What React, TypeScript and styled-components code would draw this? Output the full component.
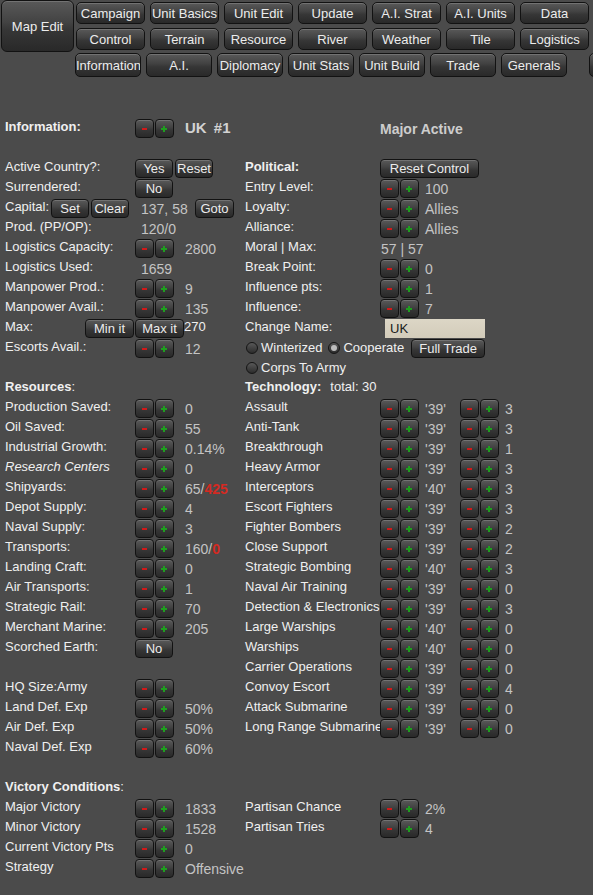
import React from 'react'
import styled, { createGlobalStyle } from 'styled-components'

const GlobalStyle = createGlobalStyle`
  html, body {
    margin: 0;
    padding: 0;
    background: #4b4b4b;
    overflow: hidden;
  }
  body {
    font-family: 'Liberation Sans', Arial, sans-serif;
    font-size: 13px;
    color: #f2f2f2;
  }
`

const Page = styled.div`
    width: 593px;
    height: 895px;
    overflow: hidden;
    background: #4b4b4b;
`

const btnFace = `
    box-sizing: border-box;
    padding: 0;
    border: 1px solid #121212;
    background: linear-gradient(to bottom, #595959 0%, #434343 42%, #363636 58%, #292929 100%);
    box-shadow: inset 0 1px 0 rgba(255, 255, 255, 0.16);
    color: #ececec;
    font-family: 'Liberation Sans', Arial, sans-serif;
    font-size: 13px;
    white-space: nowrap;
    overflow: hidden;
    flex: 0 0 auto;
`

/* ---------- top toolbar ---------- */

const TopBand = styled.div`
    display: flex;
    height: 53px;
`

const ToolBtn = styled.button<{ $w: number; $h: number; $ml?: number }>`
    ${btnFace}
    width: ${p => p.$w}px;
    height: ${p => p.$h}px;
    margin-left: ${p => p.$ml ?? 0}px;
    border-radius: 5px;
`

const MapEditBtn = styled(ToolBtn)`
    margin-left: 1px;
    border-radius: 6px;
`

const TabGrid = styled.div`
    display: grid;
    grid-template-columns: repeat(7, 69px);
    grid-auto-rows: 22px;
    gap: 4px 5px;
    padding-top: 2px;
    margin-left: 2px;
`

const TabRow = styled.div`
    display: flex;
    gap: 5px;
    padding-left: 75px;
    height: 24px;
`

/* ---------- panel ---------- */

const Content = styled.div`
    display: flex;
    padding: 41px 0 0 5px;
`

const Column = styled.div<{ $w?: number }>`
    display: flex;
    flex-direction: column;
    ${p => p.$w ? `flex: 0 0 ${p.$w}px;` : 'flex: 1;'}
`

const Row = styled.div<{ $center?: boolean }>`
    display: flex;
    align-items: ${p => p.$center ? 'center' : 'flex-start'};
    height: 20px;
    white-space: nowrap;
`

const Label = styled.span<{ $w?: number; $bold?: boolean; $italic?: boolean; $ml?: number }>`
    ${p => p.$w !== undefined ? `flex: 0 0 ${p.$w}px; width: ${p.$w}px; min-width: 0;` : 'flex: 0 0 auto;'}
    margin-left: ${p => p.$ml ?? 0}px;
    overflow: visible;
    line-height: 18px;
    font-size: 13px;
    color: #f0f0f0;
    font-weight: ${p => p.$bold ? 700 : 400};
    font-style: ${p => p.$italic ? 'italic' : 'normal'};
`

const Value = styled.span<{ $ml?: number; $w?: number }>`
    margin-left: ${p => p.$ml ?? 0}px;
    ${p => p.$w ? `flex: 0 0 ${p.$w}px;` : ''}
    padding-top: 3px;
    line-height: 16px;
    font-size: 14px;
    color: #c4c4c4;
`

const Red = styled.b`
    color: #d42a22;
`

const Title = styled.span`
    margin-left: 11px;
    line-height: 20px;
    font-size: 15px;
    font-weight: 700;
    color: #d2d2d2;
    word-spacing: 3px;
`

const Status = styled.span`
    line-height: 22px;
    font-size: 14px;
    font-weight: 700;
    color: #cdcdcd;
`

const Pair = styled.div<{ $ml?: number }>`
    display: flex;
    gap: 1px;
    margin-top: 1px;
    margin-left: ${p => p.$ml ?? 0}px;
    flex: 0 0 auto;
`

const StepBtn = styled.button<{ $plus?: boolean }>`
    ${btnFace}
    position: relative;
    width: 19px;
    height: 19px;
    border-radius: 4px;

    &::before {
        content: '';
        position: absolute;
        left: ${p => p.$plus ? 5 : 6}px;
        top: 8px;
        width: ${p => p.$plus ? 6 : 5}px;
        height: 2px;
        background: ${p => p.$plus ? '#1f9e1f' : '#cf1a1a'};
    }

    ${p => p.$plus ? `
    &::after {
        content: '';
        position: absolute;
        left: 7px;
        top: 6px;
        width: 2px;
        height: 6px;
        background: #1f9e1f;
    }` : ''}
`

const TextBtn = styled.button<{ $w: number; $ml?: number }>`
    ${btnFace}
    width: ${p => p.$w}px;
    height: 19px;
    margin-top: 1px;
    margin-left: ${p => p.$ml ?? 0}px;
    border-radius: 4px;
    line-height: 17px;
`

const NameInput = styled.input`
    box-sizing: border-box;
    width: 100px;
    height: 19px;
    margin: 1px 0 0 5px;
    padding: 0 5px;
    border: 0;
    background: linear-gradient(to bottom, #dcd6c6, #d3ccba);
    color: #1b1b1b;
    font-family: 'Liberation Sans', Arial, sans-serif;
    font-size: 13px;
    outline: none;
`

const Toggle = styled.span<{ $on?: boolean; $ml?: number }>`
    position: relative;
    box-sizing: border-box;
    flex: 0 0 12px;
    height: 12px;
    margin-left: ${p => p.$ml ?? 0}px;
    margin-right: 3px;
    border-radius: 50%;
    border: 1px solid #151515;
    background: linear-gradient(to bottom, #585858, #2c2c2c);

    ${p => p.$on ? `
    &::after {
        content: '';
        position: absolute;
        left: 2px;
        top: 2px;
        width: 6px;
        height: 6px;
        border-radius: 50%;
        background: #bdbdbd;
    }` : ''}
`

const Blank = styled.div`
    height: 20px;
`

const Stepper: React.FC<{ ml?: number }> = ({ ml }) => (
    <Pair $ml={ml}>
        <StepBtn aria-label='decrease' />
        <StepBtn $plus aria-label='increase' />
    </Pair>
)

type StatProps = {
    label: string;
    value?: React.ReactNode;
    w: number;
    gap: number;
    italic?: boolean;
}

const StatRow: React.FC<StatProps> = ({ label, value, w, gap, italic }) => (
    <Row>
        <Label $w={w} $italic={italic}>{label}</Label>
        <Stepper />
        {value !== undefined && <Value $ml={gap}>{value}</Value>}
    </Row>
)

const tabsTop = ['Campaign', 'Unit Basics', 'Unit Edit', 'Update', 'A.I. Strat', 'A.I. Units', 'Data',
    'Control', 'Terrain', 'Resource', 'River', 'Weather', 'Tile', 'Logistics']

const tabsBottom = ['Information', 'A.I.', 'Diplomacy', 'Unit Stats', 'Unit Build', 'Trade', 'Generals']

const resources: [string, React.ReactNode, boolean?][] = [
    ['Production Saved:', '0'],
    ['Oil Saved:', '55'],
    ['Industrial Growth:', '0.14%'],
    ['Research Centers', '0', true],
    ['Shipyards:', <>65/<Red>425</Red></>],
    ['Depot Supply:', '4'],
    ['Naval Supply:', '3'],
    ['Transports:', <>160/<Red>0</Red></>],
    ['Landing Craft:', '0'],
    ['Air Transports:', '1'],
    ['Strategic Rail:', '70'],
    ['Merchant Marine:', '205'],
]

const tech: [string, string, string][] = [
    ['Assault', "'39'", '3'],
    ['Anti-Tank', "'39'", '3'],
    ['Breakthrough', "'39'", '1'],
    ['Heavy Armor', "'39'", '3'],
    ['Interceptors', "'40'", '3'],
    ['Escort Fighters', "'39'", '3'],
    ['Fighter Bombers', "'39'", '2'],
    ['Close Support', "'39'", '2'],
    ['Strategic Bombing', "'40'", '3'],
    ['Naval Air Training', "'39'", '0'],
    ['Detection & Electronics', "'39'", '3'],
    ['Large Warships', "'40'", '0'],
    ['Warships', "'40'", '0'],
    ['Carrier Operations', "'39'", '0'],
    ['Convoy Escort', "'39'", '4'],
    ['Attack Submarine', "'39'", '0'],
    ['Long Range Submarine', "'39'", '0'],
]

const L = 130
const R = 135

const App: React.FC = () => {
    return (
        <Page>
            <GlobalStyle />

            <TopBand>
                <MapEditBtn $w={73} $h={52}>Map Edit</MapEditBtn>
                <TabGrid>
                    {tabsTop.map(t => <ToolBtn key={t} $w={69} $h={22}>{t}</ToolBtn>)}
                </TabGrid>
            </TopBand>
            <TabRow>
                {tabsBottom.map(t => <ToolBtn key={t} $w={66} $h={24}>{t}</ToolBtn>)}
                <ToolBtn $w={66} $h={24} $ml={17} />
            </TabRow>

            <Content>
                <Column $w={240}>
                    <Row>
                        <Label $w={L} $bold>Information:</Label>
                        <Stepper />
                        <Title>UK #1</Title>
                    </Row>
                    <Blank />
                    <Row>
                        <Label $w={L}>Active Country?:</Label>
                        <TextBtn $w={38}>Yes</TextBtn>
                        <TextBtn $w={38} $ml={2}>Reset</TextBtn>
                    </Row>
                    <Row>
                        <Label $w={L}>Surrendered:</Label>
                        <TextBtn $w={38}>No</TextBtn>
                    </Row>
                    <Row>
                        <Label $w={46}>Capital:</Label>
                        <TextBtn $w={38}>Set</TextBtn>
                        <TextBtn $w={38} $ml={2}>Clear</TextBtn>
                        <Value $ml={12} $w={54}>137, 58</Value>
                        <TextBtn $w={39}>Goto</TextBtn>
                    </Row>
                    <Row>
                        <Label $w={L}>Prod. (PP/OP):</Label>
                        <Value $ml={6}>120/0</Value>
                    </Row>
                    <StatRow label='Logistics Capacity:' value='2800' w={L} gap={11} />
                    <Row>
                        <Label $w={L}>Logistics Used:</Label>
                        <Value $ml={6}>1659</Value>
                    </Row>
                    <StatRow label='Manpower Prod.:' value='9' w={L} gap={11} />
                    <StatRow label='Manpower Avail.:' value='135' w={L} gap={11} />
                    <Row>
                        <Label $w={80}>Max:</Label>
                        <TextBtn $w={49}>Min it</TextBtn>
                        <TextBtn $w={49} $ml={1}>Max it</TextBtn>
                        <Label>270</Label>
                    </Row>
                    <StatRow label='Escorts Avail.:' value='12' w={L} gap={11} />
                    <Blank />
                    <Row>
                        <Label $bold>Resources</Label>
                        <Label>:</Label>
                    </Row>
                    {resources.map(([label, value, italic]) => (
                        <StatRow key={label} label={label} value={value} italic={italic} w={L} gap={11} />
                    ))}
                    <Row>
                        <Label $w={L}>Scorched Earth:</Label>
                        <TextBtn $w={38}>No</TextBtn>
                    </Row>
                    <Blank />
                    <StatRow label='HQ Size:Army' w={L} gap={11} />
                    <StatRow label='Land Def. Exp' value='50%' w={L} gap={11} />
                    <StatRow label='Air Def. Exp' value='50%' w={L} gap={11} />
                    <StatRow label='Naval Def. Exp' value='60%' w={L} gap={11} />
                    <Blank />
                    <Row>
                        <Label $bold>Victory Conditions</Label>
                        <Label>:</Label>
                    </Row>
                    <StatRow label='Major Victory' value='1833' w={L} gap={11} />
                    <StatRow label='Minor Victory' value='1528' w={L} gap={11} />
                    <StatRow label='Current Victory Pts' value='0' w={L} gap={11} />
                    <StatRow label='Strategy' value='Offensive' w={L} gap={11} />
                </Column>

                <Column>
                    <Row>
                        <Label $w={R} />
                        <Status>Major Active</Status>
                    </Row>
                    <Blank />
                    <Row>
                        <Label $w={R} $bold>Political:</Label>
                        <TextBtn $w={99}>Reset Control</TextBtn>
                    </Row>
                    <StatRow label='Entry Level:' value='100' w={R} gap={6} />
                    <StatRow label='Loyalty:' value='Allies' w={R} gap={6} />
                    <StatRow label='Alliance:' value='Allies' w={R} gap={6} />
                    <Row>
                        <Label $w={R}>Moral | Max:</Label>
                        <Value $ml={1}>57 | 57</Value>
                    </Row>
                    <StatRow label='Break Point:' value='0' w={R} gap={6} />
                    <StatRow label='Influence pts:' value='1' w={R} gap={6} />
                    <StatRow label='Influence:' value='7' w={R} gap={6} />
                    <Row>
                        <Label $w={R}>Change Name:</Label>
                        <NameInput defaultValue='UK' />
                    </Row>
                    <Row $center>
                        <Toggle $ml={1} />
                        <Label>Winterized</Label>
                        <Toggle $on $ml={6} />
                        <Label>Cooperate</Label>
                        <TextBtn $w={74} $ml={7}>Full Trade</TextBtn>
                    </Row>
                    <Row $center>
                        <Toggle $ml={1} />
                        <Label>Corps To Army</Label>
                    </Row>
                    <Row>
                        <Label $bold>Technology:</Label>
                        <Label $ml={9}>total: 30</Label>
                    </Row>
                    {tech.map(([name, year, level]) => (
                        <Row key={name}>
                            <Label $w={R}>{name}</Label>
                            <Stepper />
                            <Value $ml={6} $w={35}>{year}</Value>
                            <Stepper />
                            <Value $ml={6}>{level}</Value>
                        </Row>
                    ))}
                    <Blank />
                    <Blank />
                    <Blank />
                    <StatRow label='Partisan Chance' value='2%' w={R} gap={6} />
                    <StatRow label='Partisan Tries' value='4' w={R} gap={6} />
                </Column>
            </Content>
        </Page>
    )
}

export default App
